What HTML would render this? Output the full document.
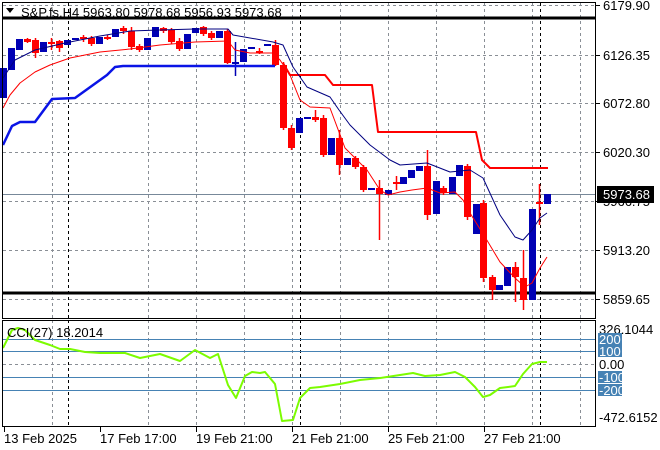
<!DOCTYPE html>
<html><head><meta charset="utf-8"><style>
html,body{margin:0;padding:0;background:#fff;width:660px;height:450px;overflow:hidden}
svg{display:block;font-family:"Liberation Sans",sans-serif;font-size:13px}
</style></head><body>
<svg id="s" width="660" height="450" xmlns="http://www.w3.org/2000/svg">
<rect width="660" height="450" fill="#fff"/>
<g id="grid" stroke="#8a8f96" stroke-width="1" stroke-dasharray="3,3" fill="none"></g>
<g id="cand"></g>
<g id="lines" fill="none"></g>
<g id="txt"></g>
</svg>
<script>
var NS="http://www.w3.org/2000/svg";
function el(p,t,a,txt){var e=document.createElementNS(NS,t);for(var k in a)e.setAttribute(k,a[k]);if(txt!==undefined)e.textContent=txt;document.getElementById(p).appendChild(e);return e;}
var vx=[52,148,196,244,292,340,388,436,484,532,580];
vx.forEach(function(x){el('grid','line',{x1:x+.5,y1:3,x2:x+.5,y2:318});el('grid','line',{x1:x+.5,y1:320,x2:x+.5,y2:426});});
[5,55,103,152,201,250,299].forEach(function(y){el('grid','line',{x1:3,y1:y+.5,x2:595,y2:y+.5});});
el('grid','line',{x1:3,y1:364.5,x2:595,y2:364.5});
[68,300,540].forEach(function(x){el('grid','line',{x1:x+.5,y1:3,x2:x+.5,y2:318,stroke:'#000'});el('grid','line',{x1:x+.5,y1:320,x2:x+.5,y2:426,stroke:'#000'});});
[339,351,377,390].forEach(function(y){el('grid','line',{x1:3,y1:y+.5,x2:595,y2:y+.5,stroke:'#4682b4','stroke-dasharray':'none'});});
el('grid','line',{x1:3,y1:194.5,x2:595,y2:194.5,stroke:'#778899','stroke-dasharray':'none'});
el('grid','line',{x1:3,y1:18,x2:595,y2:18,stroke:'#000','stroke-width':3,'stroke-dasharray':'none'});
el('grid','line',{x1:3,y1:293,x2:595,y2:293,stroke:'#000','stroke-width':3,'stroke-dasharray':'none'});
var C=[[3,98,68,100,62],[11,70,48,72,46],[19,50,39,52,37],[27,39,42,38,43],[35,40,53,38,58],[43,52,42,58,40],[51,42,42,38,50],[59,41,48,40,52],[67,45,40,48,37],[75,40,38,41,36],[83,37,39,35,42],[91,38,44,36,46],[99,44,37,46,35],[107,37,38,35,40],[115,37,29,40,28],[123,28,31,26,34],[131,31,47,27,50],[139,46,50,44,52],[147,50,38,62,37],[155,37,27,38,26],[163,28,31,27,33],[171,30,42,28,44],[179,41,49,38,51],[187,49,34,52,32],[195,33,28,34,18],[203,27,34,26,36],[211,33,38,31,40],[219,38,31,40,30],[227,31,63,29,64],[235,63,62,42,76],[243,62,49,64,42],[251,49,47,50,42],[259,51,52,48,54],[267,46,44,48,42],[275,45,65,40,66],[283,65,128,62,130],[291,128,148,125,150],[299,133,118,141,117],[307,118,117,120,112],[315,117,120,110,122],[323,118,155,115,157],[331,155,138,177,127],[339,138,165,130,175],[347,165,158,175,157],[355,158,167,156,169],[363,167,190,165,192],[371,190,188,198,162],[379,188,194,180,240],[388,195,190,210,175],[396,182,183,176,190],[403,184,177,186,172],[411,178,170,180,166],[419,171,166,208,164],[427,166,215,150,220],[436,214,181,222,179],[443,188,193,186,195],[452,194,177,196,165],[459,176,165,178,162],[467,166,217,164,220],[476,234,204,236,178],[483,203,278,200,282],[492,277,290,275,300],[499,290,285,300,277],[507,286,267,288,265],[515,267,277,262,302],[523,278,300,250,310],[532,300,209,300,200],[539,202,204,184,225],[547,204,194,211,190]];
C.forEach(function(c){var x=c[0],o=c[1],cl=c[2],h=Math.min(c[3],o,cl),l=Math.max(c[4],o,cl);var bull=cl<o;var col=bull?'#0000b4':'#ff0000';
el('cand','line',{x1:x+.5,y1:h,x2:x+.5,y2:l,stroke:col,'stroke-width':1.5});
var t=Math.min(o,cl),b=Math.max(o,cl);if(b-t<2){b=t+2;}
el('cand','rect',{x:x-3,y:t,width:7,height:b-t,fill:col});});
function pl(pts,col,w){el('lines','polyline',{points:pts.map(function(p){return p.join(',')}).join(' '),stroke:col,'stroke-width':w,'stroke-linejoin':'round'});}
pl([[3,145],[12,126],[20,122],[35,122],[52,99],[75,98],[107,75],[115,67],[123,66],[275,66]],'#0a14e6',2.5);
pl([[283,63],[290,75],[325,75],[333,85],[372,85],[378,132],[476,132],[482,160],[490,168],[548,168]],'#ff0000',2);
pl([[3,78],[15,60],[35,50],[65,43],[100,36],[130,31],[160,30],[195,29],[228,29],[233,35],[273,42],[283,45],[293,67],[307,87],[330,97],[339,110],[350,125],[370,145],[390,160],[400,165],[427,163],[450,172],[470,170],[483,178],[500,215],[515,237],[523,240],[532,230],[540,218],[547,213]],'#000080',1);
pl([[3,108],[10,95],[20,83],[35,72],[50,65],[70,58],[100,52],[130,49],[160,45],[195,42],[228,41],[235,50],[250,53],[273,53],[280,60],[290,75],[300,100],[310,107],[330,108],[345,148],[367,170],[380,190],[388,195],[400,192],[412,190],[427,188],[440,193],[455,192],[463,200],[470,213],[485,237],[500,262],[515,278],[525,287],[532,283],[540,268],[547,257]],'#ff0000',1);
pl([[3,348],[12,330],[18,328],[25,330],[35,340],[50,345],[60,349],[70,349],[85,352],[100,353],[125,353],[140,358],[160,354],[180,361],[195,350],[210,358],[218,354],[228,385],[236,398],[245,376],[252,372],[260,373],[265,372],[275,384],[282,421],[293,420],[300,398],[310,388],[320,387],[340,384],[360,380],[380,378],[400,375],[413,373],[425,376],[440,375],[455,372],[465,377],[475,387],[483,397],[490,395],[500,388],[508,387],[515,386],[523,374],[532,364],[540,362],[547,362]],'#7cfc00',2);
el('lines','rect',{x:2.5,y:2.5,width:593,height:316,stroke:'#000','stroke-width':1});
el('lines','rect',{x:2.5,y:320.5,width:593,height:106,stroke:'#000','stroke-width':1});
[[5,'6179.90'],[55,'6126.35'],[103,'6072.80'],[152,'6020.30'],[201,'5966.75'],[250,'5913.20'],[299,'5859.65']].forEach(function(a){el('lines','line',{x1:596,y1:a[0]+.5,x2:600,y2:a[0]+.5,stroke:'#000'});el('txt','text',{x:603,y:a[0]+5},a[1]);});
el('txt','rect',{x:597,y:186,width:57,height:17,fill:'#000'});
el('txt','text',{x:603,y:199,fill:'#fff'},'5973.68');
el('txt','text',{x:599,y:334},'326.1044');
[[339,'200'],[351,'100'],[377,'-100'],[390,'-200']].forEach(function(a){el('txt','rect',{x:598,y:a[0]-6,width:24,height:12,fill:'#4682b4'});el('txt','text',{x:599,y:a[0]+5,fill:'#fff'},a[1]);});
el('txt','text',{x:599,y:369},'0.00');
el('txt','text',{x:599,y:422},'-472.6152');
el('txt','text',{x:21,y:17},'S&P.fs,H4  5963.80 5978.68 5956.93 5973.68');
el('txt','polygon',{points:'6,8 14,8 10,13',fill:'#000'});
el('txt','text',{x:7,y:337},'CCI(27) 18.2014');
[[4,'13 Feb 2025'],[100,'17 Feb 17:00'],[196,'19 Feb 21:00'],[292,'21 Feb 21:00'],[388,'25 Feb 21:00'],[484,'27 Feb 21:00']].forEach(function(a){el('lines','line',{x1:a[0]+.5,y1:427,x2:a[0]+.5,y2:432,stroke:'#000'});el('txt','text',{x:a[0],y:443},a[1]);});
</script>
</body></html>
